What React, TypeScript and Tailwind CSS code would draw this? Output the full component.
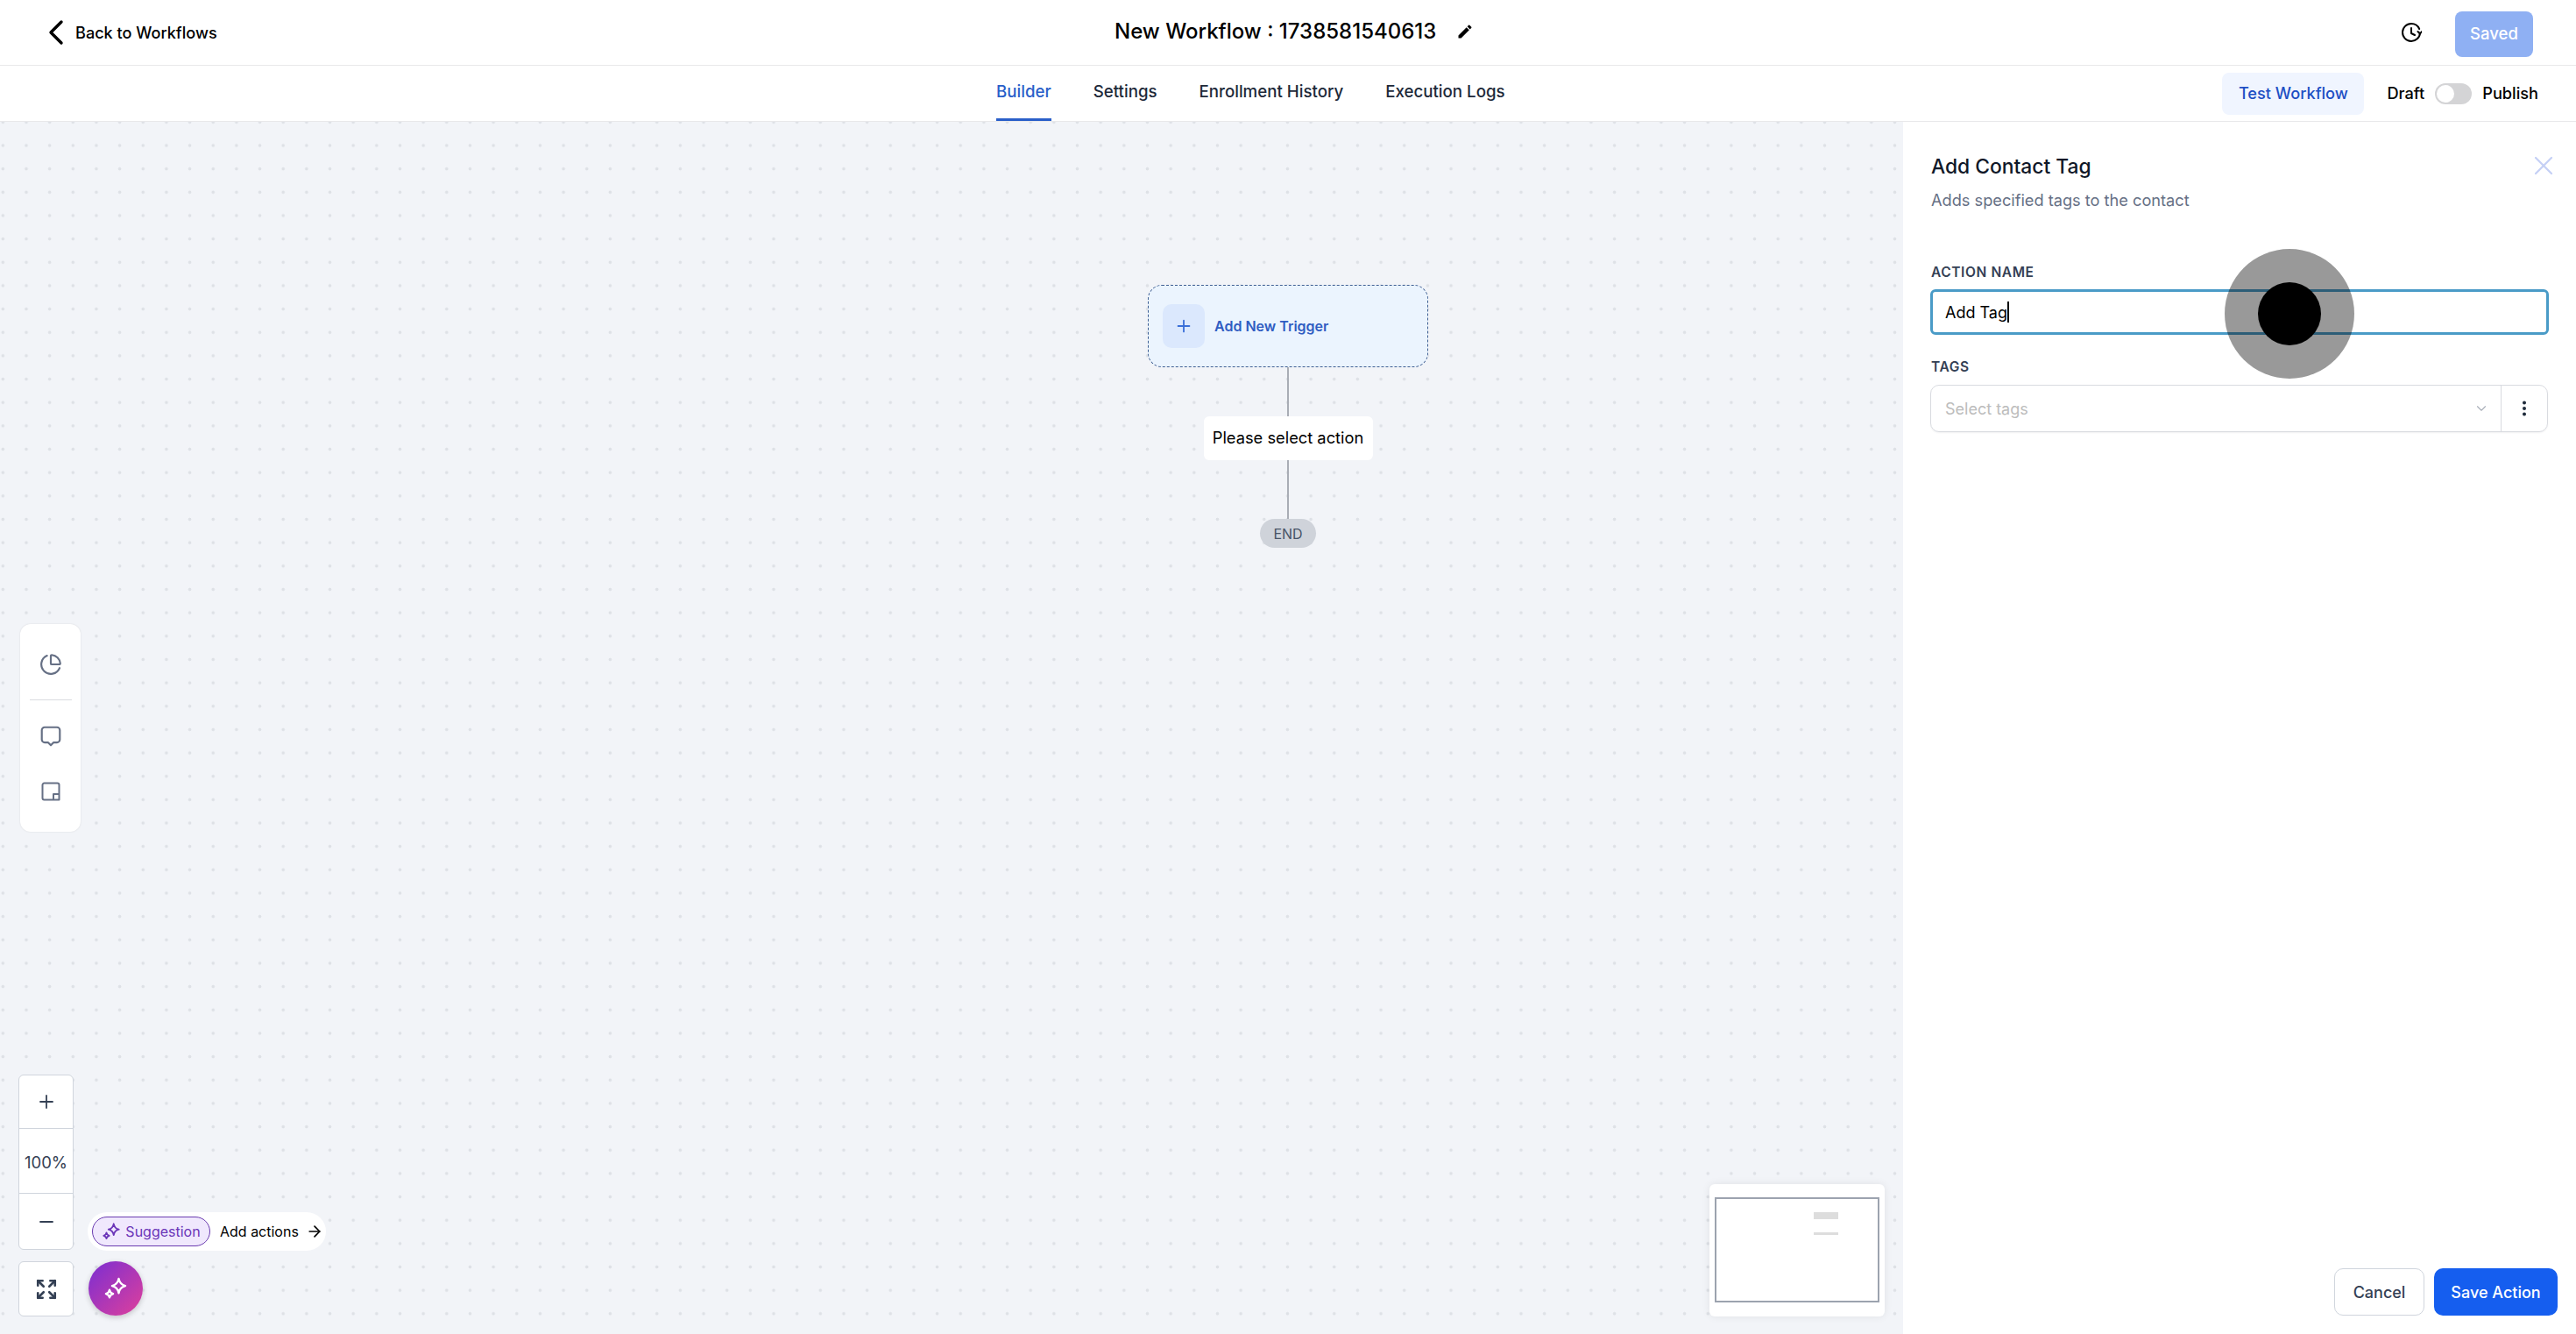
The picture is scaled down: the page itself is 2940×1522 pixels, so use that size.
import React from "react";
import { ArrowRight, ChevronDown, ChevronLeft, Expand, Minus, MoreVertical, PieChart, Plus, X } from "lucide-react";
import { MdEdit } from "react-icons/md";

function Sparks({ className }: { className?: string }) {
  return (
    <svg viewBox="0 0 24 24" fill="none" stroke="currentColor" strokeWidth="2" strokeLinejoin="round" className={className}>
      <path d="M15 2.500c.6 3.800 2.200 5.900 6.500 7-4.300 1.100-5.900 3.200-6.500 7-.6-3.800-2.200-5.900-6.500-7 4.300-1.100 5.900-3.200 6.500-7Z" />
      <path d="M6 13.500c.3 2 1.100 3 3.500 3.700-2.400.7-3.200 1.700-3.500 3.700-.3-2-1.100-3-3.500-3.700 2.400-.7 3.200-1.700 3.500-3.700Z" />
    </svg>
  );
}

function HistoryIcon({ className }: { className?: string }) {
  return (
    <svg viewBox="0 0 24 24" fill="none" stroke="currentColor" strokeWidth="2" strokeLinecap="round" strokeLinejoin="round" className={className}>
      <path d="M22 12.500A10 10 0 1 1 12 2a10 10 0 0 1 9.200 6" />
      <path d="M12 7v6l4 2" />
      <path d="m19.500 11 2.500 2.500 2-2.500" />
    </svg>
  );
}

function Tab({ label, active }: { label: string; active?: boolean }) {
  return (
    <div className={`flex h-full items-center border-b-[3px] text-[18.700px] font-medium ${active ? "border-[#2a5fc9] text-[#2a5fc9]" : "border-transparent text-[#1d2939]"}`}>
      {label}
    </div>
  );
}

export default function App() {
  return (
    <div className="relative flex h-[1522px] w-[2940px] flex-col overflow-hidden bg-white font-['Inter',sans-serif] text-black">
      {/* top bar */}
      <header className="flex h-[75px] shrink-0 items-center border-b border-[#e8e8ea]">
        <div className="flex w-[1272px] items-center pl-[40px]">
          <ChevronLeft className="-mr-[2px] h-[48px] w-[48px]" strokeWidth={1.7} />
          <span className="pt-[2px] text-[18.100px] font-medium">Back to Workflows</span>
        </div>
        <div className="flex items-center pb-[2px]">
          <span className="text-[24px] font-medium">New Workflow : 1738581540613</span>
          <MdEdit className="ml-[23px] h-[20px] w-[20px]" />
        </div>
        <div className="ml-auto flex items-center pr-[49px]">
          <HistoryIcon className="mr-[38px] h-[24px] w-[24px]" />
          <div className="mt-[4px] flex h-[52px] w-[89px] items-center justify-center rounded-[8px] bg-[#8fb0f3] text-[18.500px] font-medium text-white">Saved</div>
        </div>
      </header>

      {/* tab bar */}
      <div className="flex h-[64px] shrink-0 items-center border-b border-[#e8e8ea]">
        <div className="ml-[1137px] flex h-full items-center gap-[48px]">
          <Tab label="Builder" active />
          <Tab label="Settings" />
          <Tab label="Enrollment History" />
          <Tab label="Execution Logs" />
        </div>
        <div className="ml-auto flex items-center pr-[43px]">
          <div className="flex h-[48px] w-[162px] items-center justify-center rounded-[8px] bg-[#f0f5ff] text-[18.200px] font-medium text-[#1d4fc4]">Test Workflow</div>
          <span className="ml-[26px] text-[18.200px] font-medium">Draft</span>
          <div className="ml-[12px] flex h-[24px] w-[42px] items-center rounded-full bg-[#d4d4d6] p-[2px]">
            <div className="h-[20px] w-[20px] rounded-full bg-white" />
          </div>
          <span className="ml-[12px] text-[18.200px] font-medium">Publish</span>
        </div>
      </div>

      <div className="flex min-h-0 flex-1">
        {/* canvas */}
        <main className="relative w-[2172px] shrink-0 overflow-hidden bg-[#f2f4f8] bg-[radial-gradient(circle,#dee1e6_1.500px,transparent_2.200px)] bg-[size:26.667px_26.667px] bg-[position:-10px_-13px]">
          {/* diagram */}
          <div className="absolute left-[1310px] top-[186px] flex w-[320px] flex-col items-center">
            <div className="flex h-[94px] w-full items-center rounded-[16px] border border-dashed border-[#3f5f93] bg-[#ebf4fe] pl-[16px]">
              <div className="flex h-[50px] w-[48px] items-center justify-center rounded-[10px] bg-[#dbe8fd]">
                <Plus className="h-[22px] w-[22px] text-[#3a6fd8]" strokeWidth={2} />
              </div>
              <span className="ml-[11px] text-[16px] font-semibold text-[#2f5cc2]">Add New Trigger</span>
            </div>
            <div className="h-[56px] w-[2px] bg-[#a9adb5]" />
            <div className="flex h-[50px] w-[193px] items-center justify-center rounded-[6px] bg-white text-[18.300px] text-black">Please select action</div>
            <div className="h-[67px] w-[2px] bg-[#a9adb5]" />
            <div className="flex h-[33px] w-[64px] items-center justify-center rounded-full bg-[#cfd3da] text-[16px] text-[#475467]">END</div>
          </div>

          {/* left tools */}
          <div className="absolute left-[23px] top-[573px] flex h-[237px] w-[69px] flex-col items-center rounded-[12px] bg-white shadow-[0_0_2px_rgba(0,0,0,0.12)]">
            <PieChart className="mt-[33px] h-[26px] w-[26px] text-[#667085]" strokeWidth={2} />
            <div className="mt-[27px] h-[1px] w-[48px] bg-[#d9dbe0]" />
            <svg viewBox="0 0 24 24" fill="none" stroke="#667085" strokeWidth="2" strokeLinejoin="round" className="mt-[28px] h-[26px] w-[26px]">
              <path d="M5.500 2.500h13a3 3 0 0 1 3 3v10a3 3 0 0 1-3 3H15l-3 3-3-3H5.500a3 3 0 0 1-3-3v-10a3 3 0 0 1 3-3Z" />
            </svg>
            <svg viewBox="0 0 24 24" fill="none" stroke="#667085" strokeWidth="2" strokeLinejoin="round" className="mt-[38px] h-[24px] w-[24px]">
              <path d="M4.500 2.500h15a2 2 0 0 1 2 2v17h-17a2 2 0 0 1-2-2v-15a2 2 0 0 1 2-2Z" />
              <path d="M15 21.500V15h6.500" />
            </svg>
          </div>

          {/* zoom controls */}
          <div className="absolute left-[21px] top-[1087px] flex h-[200px] w-[63px] flex-col rounded-[6px] border border-[#d0d5dd] bg-white text-[#344054]">
            <div className="flex h-[61px] items-center justify-center border-b border-[#d0d5dd]">
              <Plus className="h-[24px] w-[24px]" strokeWidth={1.8} />
            </div>
            <div className="flex h-[74px] items-center justify-center border-b border-[#d0d5dd] pt-[4px] text-[18.500px]">100%</div>
            <div className="flex flex-1 items-center justify-center">
              <Minus className="h-[24px] w-[24px]" strokeWidth={1.8} />
            </div>
          </div>
          <div className="absolute left-[21px] top-[1300px] flex h-[63px] w-[63px] items-center justify-center rounded-[6px] border border-[#d0d5dd] bg-white text-[#344054]">
            <Expand className="h-[26px] w-[26px]" strokeWidth={2.4} />
          </div>

          {/* suggestion */}
          <div className="absolute left-[100px] top-[1244px] flex h-[44px] w-[272px] items-center rounded-full bg-white pl-[5px]">
            <div className="flex h-[34px] w-[135px] items-center justify-center gap-[5px] rounded-full border border-[#6a3bb0] bg-[#f0e8fd] text-[16px] text-[#6b35b8]">
              <Sparks className="h-[22px] w-[22px]" />
              Suggestion
            </div>
            <span className="ml-[11px] text-[16px]">Add actions</span>
            <ArrowRight className="ml-[8px] h-[20px] w-[20px]" strokeWidth={2} />
          </div>
          <div className="absolute left-[101px] top-[1300px] flex h-[62px] w-[62px] items-center justify-center rounded-full bg-[linear-gradient(135deg,#7a2ed2,#df409b)] text-white shadow-[0_2px_6px_rgba(0,0,0,0.2)]">
            <Sparks className="h-[28px] w-[28px]" />
          </div>

          {/* minimap */}
          <div className="absolute left-[1951px] top-[1212px] h-[151px] w-[200px] rounded-[6px] bg-white p-[6px] pt-[15px] shadow-[0_0_10px_rgba(0,0,0,0.08)]">
            <div className="relative h-[120px] w-[188px] border-2 border-[#9ca3af]">
              <div className="absolute left-[111px] top-[15px] h-[8px] w-[28px] bg-[#dddddd]" />
              <div className="absolute left-[111px] top-[38px] h-[3px] w-[28px] bg-[#dddddd]" />
            </div>
          </div>
        </main>

        {/* side panel */}
        <aside className="flex min-w-0 flex-1 flex-col bg-white px-[32px] pb-[21px]">
          <div className="mt-[36px] flex items-start justify-between">
            <div>
              <div className="text-[22.800px] font-medium leading-[29px] text-[#101828]">Add Contact Tag</div>
              <div className="mt-[12px] text-[18.200px] leading-[24px] text-[#667085]">Adds specified tags to the contact</div>
            </div>
            <X className="-mr-[13px] -mt-[4px] h-[36px] w-[36px] text-[#c5d0f5]" strokeWidth={1.5} />
          </div>

          <div className="mt-[61px] text-[15.500px] font-semibold uppercase leading-[20px] tracking-[0.600px] text-[#344054]">Action Name</div>
          <div className="-mx-px mt-[9px] flex h-[52px] items-center rounded-[6px] border-[3px] border-[#4a9bc7] pl-[14px] text-[18px]">
            <span>Add Tag</span>
            <span className="h-[24px] w-[2px] bg-black" />
          </div>

          <div className="mt-[27px] text-[15.500px] font-semibold uppercase leading-[20px] tracking-[0.600px] text-[#344054]">Tags</div>
          <div className="-ml-px mt-[10px] flex h-[54px] items-center rounded-[10px] border border-[#d9dbe0] shadow-[0_1px_2px_rgba(16,24,40,0.06)]">
            <span className="ml-[16px] flex-1 text-[18px] text-[#bcbcbc]">Select tags</span>
            <ChevronDown className="mr-[13px] h-[18px] w-[18px] text-[#a9afb9]" strokeWidth={1.5} />
            <div className="flex h-full w-[53px] items-center justify-center border-l border-[#d9dbe0]">
              <MoreVertical className="h-[22px] w-[22px] text-[#1d2939]" strokeWidth={2.4} />
            </div>
          </div>

          <div className="-mr-[11px] mt-auto flex justify-end gap-[11px]">
            <div className="flex h-[54px] w-[103px] items-center justify-center rounded-[10px] border border-[#d0d5dd] bg-white text-[18px] font-medium text-[#344054]">Cancel</div>
            <div className="flex h-[54px] w-[141px] items-center justify-center rounded-[10px] bg-[#155eef] text-[18px] font-medium text-white">Save Action</div>
          </div>
        </aside>
      </div>

      {/* click indicator */}
      <div className="absolute left-[2539px] top-[284px] flex h-[148px] w-[148px] items-center justify-center rounded-full bg-black/40">
        <div className="h-[72px] w-[72px] rounded-full bg-black" />
      </div>
    </div>
  );
}
